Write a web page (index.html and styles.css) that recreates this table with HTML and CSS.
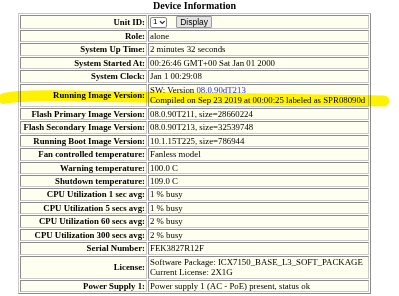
FILE: index.html
```html
<!DOCTYPE html>
<html lang="en">
<head>
    <meta charset="UTF-8">
    <title>Device Information</title>
    <link rel="stylesheet" href="styles.css">
</head>
<body>
    <main class="page">
        <table class="info">
            <caption class="title">Device Information</caption>
            <tr>
                <th>Unit ID:</th>
                <td class="controls">
                    <span class="unit">1<svg class="chev" width="7" height="5" viewBox="0 0 7 5"><path d="M1 1 L3.5 3.5 L6 1" /></svg></span>
                    <button class="btn" type="button">Display</button>
                </td>
            </tr>
            <tr><th>Role:</th><td>alone</td></tr>
            <tr><th>System Up Time:</th><td>2 minutes 32 seconds</td></tr>
            <tr><th>System Started At:</th><td>00:26:46 GMT+00 Sat Jan 01 2000</td></tr>
            <tr><th>System Clock:</th><td>Jan 1 00:29:08</td></tr>
            <tr>
                <th>Running Image Version:</th>
                <td>SW: Version <a class="ver" href="#">08.0.90dT213</a><br>Compiled on Sep 23 2019 at 00:00:25 labeled as SPR08090d</td>
            </tr>
            <tr><th>Flash Primary Image Version:</th><td>08.0.90T211, size=28660224</td></tr>
            <tr><th>Flash Secondary Image Version:</th><td>08.0.90T213, size=32539748</td></tr>
            <tr><th>Running Boot Image Version:</th><td>10.1.15T225, size=786944</td></tr>
            <tr><th>Fan controlled temperature:</th><td>Fanless model</td></tr>
            <tr><th>Warning temperature:</th><td>100.0 C</td></tr>
            <tr><th>Shutdown temperature:</th><td>109.0 C</td></tr>
            <tr><th>CPU Utilization 1 sec avg:</th><td>1 % busy</td></tr>
            <tr><th>CPU Utilization 5 secs avg:</th><td>1 % busy</td></tr>
            <tr><th>CPU Utilization 60 secs avg:</th><td>2 % busy</td></tr>
            <tr><th>CPU Utilization 300 secs avg:</th><td>2 % busy</td></tr>
            <tr><th>Serial Number:</th><td>FEK3827R12F</td></tr>
            <tr>
                <th>License:</th>
                <td>Software Package: ICX7150_BASE_L3_SOFT_PACKAGE<br>Current License: 2X1G</td>
            </tr>
            <tr><th>Power Supply 1:</th><td>Power supply 1 (AC - PoE) present, status ok</td></tr>
        </table>

        <!-- marker stroke drawn over the running image row -->
        <svg class="marker" width="399" height="120" viewBox="0 0 399 120">
            <path d="M4 98.5 Q 20 95 70 96 T 384 101" />
        </svg>
    </main>
</body>
</html>
```

FILE: styles.css
```css
body{
    margin: 0;
    padding: 0;
    background-color: #ffffff;
    color: #000000;
    font-family: "Liberation Serif", "Times New Roman", serif;
}

.page{
    position: relative;
    padding-left: 18px;
}

.info{
    width: 353px;
    table-layout: fixed;
    border: 1px solid;
    border-color: #c8c8c8 #8c8c8c #8c8c8c #c8c8c8;
    border-spacing: 1px;
    font-size: 8.8px;
    line-height: 10.45px;
}

.title{
    font-size: 10px;
    line-height: 12px;
    font-weight: bold;
    padding-bottom: 1px;
}

.info th,
.info td{
    border: 1px solid;
    border-color: #8c8c8c #c8c8c8 #c8c8c8 #8c8c8c;
    background-color: #fffff0;
    padding: 0 1px;
    vertical-align: middle;
    white-space: nowrap;
}

.info th{
    width: 124px;
    padding-left: 0;
    text-align: right;
}

.info td{
    text-align: left;
}

.ver{
    color: #2a2aff;
    text-decoration: none;
}

.controls{
    padding-top: 1px;
    padding-bottom: 1px;
}

.unit{
    display: inline-flex;
    align-items: center;
    gap: 2px;
    box-sizing: border-box;
    width: 17px;
    height: 11px;
    padding-left: 2px;
    vertical-align: middle;
    border: 1px solid #8a8a8a;
    border-radius: 2px;
    background-color: #ffffff;
    font-family: "Liberation Sans", Arial, sans-serif;
    font-size: 8px;
}

.chev path{
    fill: none;
    stroke: #222222;
    stroke-width: 1.2;
}

.btn{
    box-sizing: border-box;
    height: 12px;
    padding: 0 3px;
    margin-left: 7px;
    vertical-align: middle;
    border: 1px solid #9a9a9a;
    border-radius: 1px;
    background-color: #e4e4e4;
    font-family: "Liberation Sans", Arial, sans-serif;
    font-size: 8.5px;
    line-height: 10px;
}

.marker{
    position: absolute;
    left: 0;
    top: 0;
    pointer-events: none;
    mix-blend-mode: multiply;
}

.marker path{
    fill: none;
    stroke: #fff200;
    stroke-width: 11;
    stroke-linecap: round;
}
```
